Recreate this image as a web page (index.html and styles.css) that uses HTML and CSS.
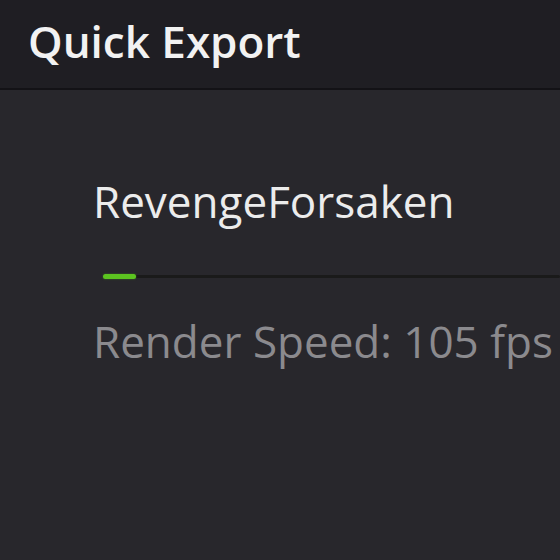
FILE: index.html
```html
<!DOCTYPE html>
<html>
<head>
<meta charset="utf-8">
<link rel="stylesheet" href="styles.css">
</head>
<body>
<div class="window">
  <header class="titlebar"><h1 class="title">Quick Export</h1></header>
  <main class="content">
    <div class="job">
      <div class="job-name">RevengeForsaken</div>
      <div class="progress"><div class="progress-fill" style="width: 33px"></div></div>
      <div class="speed">Render Speed: 105 fps</div>
    </div>
  </main>
</div>
</body>
</html>
```

FILE: styles.css
```css
html, body {
  margin: 0;
  padding: 0;
  width: 560px;
  height: 560px;
  overflow: hidden;
  background: #28272c;
  font-family: "Open Sans", "Noto Sans", sans-serif;
}
.window {
  display: flex;
  flex-direction: column;
  height: 560px;
}
.titlebar {
  height: 90px;
  background: #1f1e23;
  border-bottom: 2px solid #131216;
  display: flex;
  align-items: center;
  padding: 0 0 6px 28px;
  box-sizing: border-box;
}
.title {
  margin: 0;
  font-size: 44px;
  font-weight: 600;
  color: #f2f2f2;
  line-height: 58px;
}
.content {
  flex: 1;
  padding: 81px 0 0 93px;
}
.job {
  display: flex;
  flex-direction: column;
}
.job-name {
  font-size: 44px;
  color: #ececec;
  line-height: 60px;
  white-space: nowrap;
}
.progress {
  margin: 44px 0 0 10px;
  height: 3px;
  background: #1a1a1a;
  border-radius: 2px;
}
.progress-fill {
  height: 5px;
  margin-top: -1px;
  background: #5cc420;
  border-radius: 3px;
  box-shadow: 0 0 2px rgba(92, 196, 32, 0.5);
}
.speed {
  margin-top: 33px;
  font-size: 44px;
  color: #8b8a8e;
  line-height: 60px;
  white-space: nowrap;
}
```
